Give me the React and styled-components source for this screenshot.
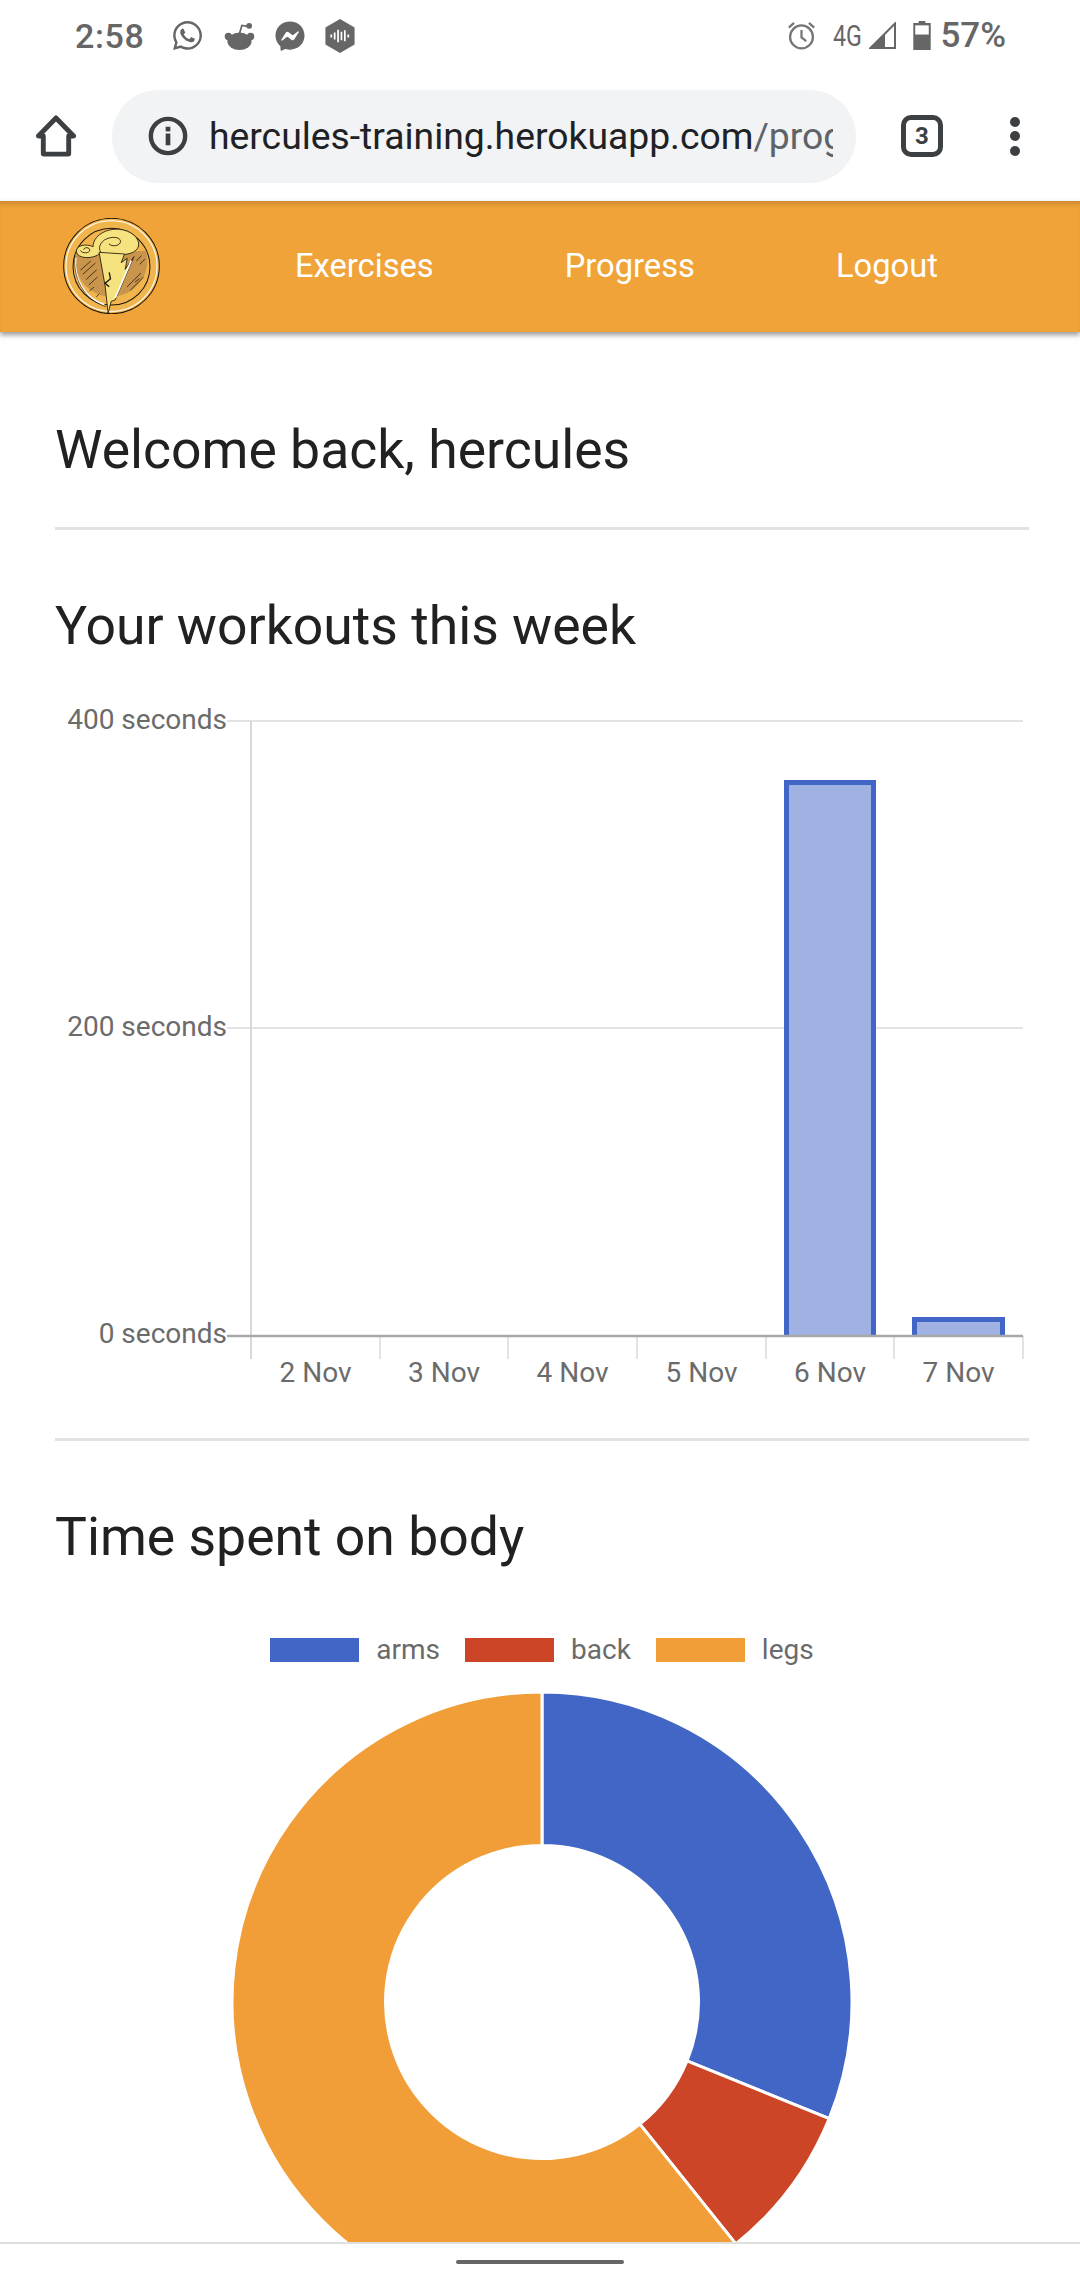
import React from 'react'
import styled, { createGlobalStyle } from 'styled-components'
import { FaWhatsapp, FaFacebookMessenger } from 'react-icons/fa'

const BLUE = '#4166c6'
const RED = '#cc4526'
const ORANGE = '#f29e38'

const weekTicks = [
  { label: '400 seconds', y: 719 },
  { label: '200 seconds', y: 1026 },
  { label: '0 seconds', y: 1333 },
]
const gridLines = [720, 1027]
const dayEdges = [251, 380, 508, 637, 766, 894, 1023]
const days = ['2 Nov', '3 Nov', '4 Nov', '5 Nov', '6 Nov', '7 Nov']

const slices = [
  { color: BLUE, from: 0, to: 112.1 },
  { color: RED, from: 112.1, to: 141.3 },
  { color: ORANGE, from: 141.3, to: 360 },
]

const point = (r, deg) => {
  const a = (deg * Math.PI) / 180
  return `${(542 + r * Math.sin(a)).toFixed(2)} ${(2002 - r * Math.cos(a)).toFixed(2)}`
}

const slicePath = (from, to) => {
  const large = to - from > 180 ? 1 : 0
  return `M${point(310, from)} A310 310 0 ${large} 1 ${point(310, to)} L${point(156.5, to)} A156.5 156.5 0 ${large} 0 ${point(156.5, from)} Z`
}

const Logo = () => (
  <LogoSvg viewBox="22 22 290 288" preserveAspectRatio="none">
    <circle cx="167" cy="166" r="143" fill="#f1b54d" stroke="#1c1408" strokeWidth="3" />
    <circle cx="167" cy="166" r="136" fill="none" stroke="#fff" strokeWidth="3" />
    <circle cx="167" cy="168" r="115" fill="#f1b54d" stroke="#1c1408" strokeWidth="3" />
    <path d="M60 130 L270 120 A108 108 0 1 1 60 130 Z" fill="#c9954d" />
    <path d="M60 140 C52 200 84 262 146 282" fill="none" stroke="#fff" strokeWidth="5" />
    <path d="M58 135 C50 200 84 268 150 288" fill="none" stroke="#1c1408" strokeWidth="2" />
    <g stroke="#2a1c0c" strokeWidth="2.4" strokeLinecap="round">
      <path d="M75 178 L104 152 M82 190 L118 158 M92 206 L122 178 M100 222 L124 200" />
      <path d="M102 240 L114 230 M122 258 L130 250" />
      <path d="M214 228 L254 188 M224 238 L262 200 M238 214 L250 204" />
      <path d="M242 150 L256 136 M252 160 L266 146" />
    </g>
    <path d="M62 122 C62 104 90 98 112 108 C112 76 150 52 192 56 C226 60 252 82 248 106 C242 126 220 130 200 132 L132 128 C116 146 62 146 62 122 Z" fill="#f6e27f" stroke="#1c1408" strokeWidth="2.5" strokeLinejoin="round" />
    <path d="M160 100 C168 110 194 106 194 92 C194 78 164 76 146 88 C126 102 130 120 136 126 M74 120 C80 130 102 128 102 118 C102 110 86 108 84 116" fill="none" stroke="#1c1408" strokeWidth="2.5" strokeLinecap="round" />
    <path d="M130 125 L206 130 L196 156 L214 143 L208 176 L234 138 L178 268 L166 272 L157 308 L148 226 Z" fill="#f6e27f" stroke="#1c1408" strokeWidth="2.5" strokeLinejoin="round" />
    <path d="M226 150 L178 262" stroke="#fff" strokeWidth="5" />
    <path d="M160 185 L164 204 L148 218 L160 228" fill="none" stroke="#1c1408" strokeWidth="4" />
  </LogoSvg>
)

const WeekChart = () => (
  <ChartSvg viewBox="55 700 974 700">
    {gridLines.map((y) => (
      <line key={y} x1="227" x2="1023" y1={y} y2={y} stroke="#e3e3e3" strokeWidth="2" />
    ))}
    {dayEdges.map((x, i) => (
      <line key={x} x1={x} x2={x} y1={i === 0 ? 720 : 1335} y2="1358" stroke={i === 0 ? '#d8d8d8' : '#e3e3e3'} strokeWidth="2" />
    ))}
    <path d="M786.5 1335 V781.5 H873.5 V1335" fill="#9fb2e2" stroke={BLUE} strokeWidth="5" />
    <path d="M914.5 1335 V1318.5 H1002.5 V1335" fill="#9fb2e2" stroke={BLUE} strokeWidth="5" />
    <line x1="227" x2="1023" y1="1335" y2="1335" stroke="#a8a8a8" strokeWidth="2.5" />
    {weekTicks.map((t) => (
      <ChartLabel key={t.label} x="227" y={t.y + 9} textAnchor="end">{t.label}</ChartLabel>
    ))}
    {days.map((d, i) => (
      <ChartLabel key={d} x={(dayEdges[i] + dayEdges[i + 1]) / 2} y="1381" textAnchor="middle">{d}</ChartLabel>
    ))}
  </ChartSvg>
)

export default function App() {
  return (
    <Phone>
      <GlobalStyle />
      <StatusBar>
        <StatusGroup>
          <Clock>2:58</Clock>
          <NotificationIcons>
            <FaWhatsapp size={33} />
            <svg width="31" height="28" viewBox="0 0 31 29" fill="#666">
              <ellipse cx="15.5" cy="20" rx="12.5" ry="9" />
              <circle cx="4" cy="15" r="3.8" />
              <circle cx="27" cy="15" r="3.8" />
              <path d="M15.5 12 L18 3.5 L24 4.5" fill="none" stroke="#666" strokeWidth="1.8" />
              <circle cx="25.5" cy="4" r="3" />
            </svg>
            <FaFacebookMessenger size={30} />
            <svg width="30" height="34" viewBox="0 0 30 35">
              <path d="M15 0 L30 8.7 V26.3 L15 35 L0 26.3 V8.7 Z" fill="#666" />
              <path d="M6 16 V19 M9.5 14 V21 M13 11 V24 M16.5 13 V22 M20 11.5 V23 M23.5 16 V19" stroke="#fff" strokeWidth="1.8" />
            </svg>
          </NotificationIcons>
        </StatusGroup>
        <StatusGroup>
          <svg width="29" height="29" viewBox="0 0 30 31" fill="none" stroke="#757575" strokeWidth="2.4">
            <circle cx="15" cy="17" r="12.2" />
            <path d="M15 9.5 V17.5 L20 21.5 M1.5 7 L7 2 M28.5 7 L23 2" />
          </svg>
          <Network>4G</Network>
          <SignalIcon width="27" height="27" viewBox="0 0 27 27">
            <path d="M26 1.5 V26 H1.5 Z" fill="none" stroke="#666" strokeWidth="2" />
            <path d="M16 11.5 V27 H0 Z" fill="#666" />
          </SignalIcon>
          <BatteryIcon width="18" height="29" viewBox="0 0 18 30">
            <path d="M5.5 0 H12.5 V2 H18 V30 H0 V2 H5.5 Z" fill="#666" />
            <rect x="2" y="4.5" width="14" height="9.5" fill="#fff" />
          </BatteryIcon>
          <Battery>57%</Battery>
        </StatusGroup>
      </StatusBar>

      <Toolbar>
        <svg width="42" height="42" viewBox="0 0 42 43" fill="none" stroke="#3c4043" strokeWidth="5" strokeLinejoin="round">
          <path d="M21 3 L39 21.5 H34 V40 H8 V21.5 H3 Z" />
        </svg>
        <UrlPill>
          <svg width="40" height="40" viewBox="0 0 40 41" style={{ flexShrink: 0 }}>
            <circle cx="20" cy="20.5" r="17.6" fill="none" stroke="#3c4043" strokeWidth="4.5" />
            <rect x="17.6" y="18" width="4.8" height="12" fill="#3c4043" />
            <rect x="17.6" y="11" width="4.8" height="4.8" fill="#3c4043" />
          </svg>
          <UrlText>hercules-training.herokuapp.com<UrlPath>/prog</UrlPath></UrlText>
        </UrlPill>
        <TabCount>3</TabCount>
        <MoreDots><i /><i /><i /></MoreDots>
      </Toolbar>

      <NavBar>
        <Logo />
        <NavLink $gap={135}>Exercises</NavLink>
        <NavLink $gap={131}>Progress</NavLink>
        <NavLink $gap={141}>Logout</NavLink>
      </NavBar>

      <Main>
        <Title>Welcome back, hercules</Title>
        <Rule />
        <Title>Your workouts this week</Title>
        <WeekChart />
        <Rule />
        <Title>Time spent on body</Title>
        <Legend>
          <LegendItem><Swatch $color={BLUE} />arms</LegendItem>
          <LegendItem><Swatch $color={RED} />back</LegendItem>
          <LegendItem><Swatch $color={ORANGE} />legs</LegendItem>
        </Legend>
        <DonutSvg viewBox="230 1690 624 640">
          {slices.map((s) => (
            <path key={s.color} d={slicePath(s.from, s.to)} fill={s.color} stroke="#fff" strokeWidth="3" />
          ))}
        </DonutSvg>
      </Main>

      <HomeBar><HomePill /></HomeBar>
    </Phone>
  )
}

const GlobalStyle = createGlobalStyle`
html, body {
    margin: 0;
    padding: 0;
    background: #fff;
    overflow: hidden;
}
`

const Phone = styled.div`
position: relative;
width: 1080px;
height: 2280px;
overflow: hidden;
background: #fff;
font-family: Roboto, "Noto Sans", sans-serif;
color: #212121;
`

const StatusBar = styled.div`
display: flex;
justify-content: space-between;
align-items: center;
height: 71px;
padding: 0 74px 0 75px;
box-sizing: border-box;
color: #666;
`

const StatusGroup = styled.div`
display: flex;
align-items: center;
`

const Clock = styled.span`
width: 96px;
font-size: 34px;
font-weight: 500;
letter-spacing: 0.6px;
`

const NotificationIcons = styled.div`
display: flex;
align-items: center;
gap: 20px;
`

const Network = styled.span`
font-size: 29px;
width: 30px;
margin-left: 17px;
transform: scaleX(0.8);
transform-origin: left center;
white-space: nowrap;
`

const SignalIcon = styled.svg`
margin-left: 6px;
`

const BatteryIcon = styled.svg`
margin-left: 17px;
`

const Battery = styled.span`
font-size: 35px;
font-weight: 500;
margin-left: 9px;
`

const Toolbar = styled.div`
display: flex;
align-items: center;
height: 130px;
padding-left: 35px;
`

const UrlPill = styled.div`
display: flex;
align-items: center;
gap: 21px;
width: 744px;
height: 93px;
margin-left: 35px;
padding: 0 23px 0 36px;
box-sizing: border-box;
background: #f1f3f4;
border-radius: 47px;
`

const UrlText = styled.div`
flex: 1;
min-width: 0;
overflow: hidden;
white-space: nowrap;
font-size: 37.3px;
line-height: 48px;
color: #202124;
`

const UrlPath = styled.span`
color: #5f6368;
`

const TabCount = styled.div`
display: flex;
align-items: center;
justify-content: center;
width: 42px;
height: 42px;
margin-left: 45px;
box-sizing: border-box;
border: 5px solid #3c4043;
border-radius: 10px;
font-size: 24px;
font-weight: 700;
color: #3c4043;
`

const MoreDots = styled.div`
display: flex;
flex-direction: column;
gap: 4.5px;
margin-left: 67px;

i {
    display: block;
    width: 10px;
    height: 10px;
    border-radius: 50%;
    background: #3c4043;
}
`

const NavBar = styled.nav`
position: relative;
display: flex;
align-items: center;
height: 131px;
padding: 0 0 2px 63px;
box-sizing: border-box;
background: #f0a338;
box-shadow: 0 3px 5px rgba(0, 0, 0, 0.4), inset 0 6px 6px -4px rgba(0, 0, 0, 0.2);
`

const LogoSvg = styled.svg`
width: 97px;
height: 96px;
flex-shrink: 0;
`

const NavLink = styled.a`
margin-left: ${(p) => p.$gap}px;
font-size: 32.7px;
font-weight: 400;
color: #fff;
`

const Main = styled.main`
padding: 90px 51px 0 55px;
`

const Title = styled.h2`
margin: 0;
font-size: 53.5px;
font-weight: 400;
line-height: 56px;
color: #212121;
`

const Rule = styled.hr`
height: 3px;
margin: 49px 0 68px;
border: 0;
background: #e2e2e2;
`

const ChartSvg = styled.svg`
display: block;
width: 974px;
height: 700px;
margin-top: 47px;
margin-bottom: -12px;
`

const ChartLabel = styled.text`
font-family: Roboto, sans-serif;
font-size: 28px;
fill: #6b6b6b;
`

const Legend = styled.div`
display: flex;
justify-content: center;
gap: 25px;
margin-top: 70px;
font-size: 28px;
line-height: 30px;
color: #6b6b6b;
`

const LegendItem = styled.div`
display: flex;
align-items: center;
gap: 17px;
`

const Swatch = styled.span`
width: 89px;
height: 24px;
background: ${(p) => p.$color};
`

const DonutSvg = styled.svg`
display: block;
width: 624px;
height: 640px;
margin: 25px 0 0 175px;
`

const HomeBar = styled.div`
position: absolute;
left: 0;
right: 0;
bottom: 0;
display: flex;
align-items: center;
justify-content: center;
height: 36px;
background: #fff;
border-top: 2px solid #dfdfdf;
`

const HomePill = styled.div`
width: 168px;
height: 4px;
border-radius: 2px;
background: #666;
`
